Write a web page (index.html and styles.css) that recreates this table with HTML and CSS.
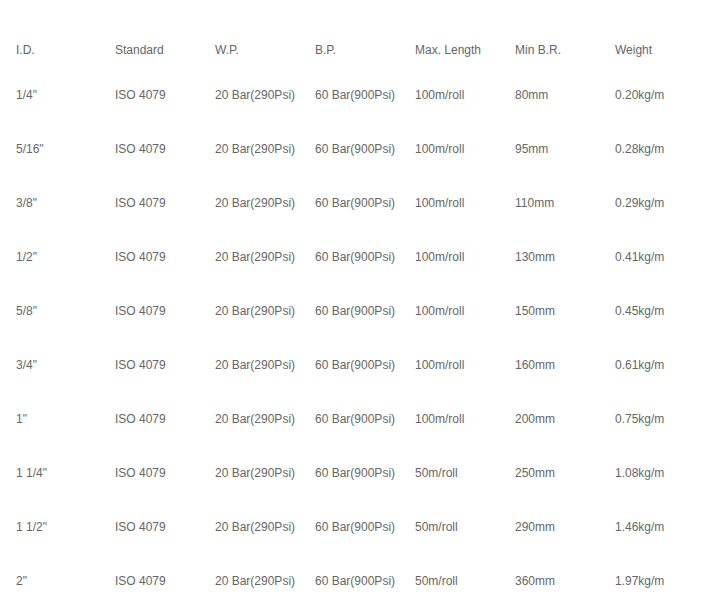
FILE: index.html
```html
<!DOCTYPE html>
<html>
<head>
<meta charset="utf-8">
<link rel="stylesheet" href="styles.css">
</head>
<body>
<table class="spec">
  <thead>
    <tr><th>I.D.</th><th>Standard</th><th>W.P.</th><th>B.P.</th><th>Max. Length</th><th>Min B.R.</th><th>Weight</th></tr>
  </thead>
  <tbody>
    <tr><td>1/4"</td><td>ISO 4079</td><td>20 Bar(290Psi)</td><td>60 Bar(900Psi)</td><td>100m/roll</td><td>80mm</td><td>0.20kg/m</td></tr>
    <tr><td>5/16"</td><td>ISO 4079</td><td>20 Bar(290Psi)</td><td>60 Bar(900Psi)</td><td>100m/roll</td><td>95mm</td><td>0.28kg/m</td></tr>
    <tr><td>3/8"</td><td>ISO 4079</td><td>20 Bar(290Psi)</td><td>60 Bar(900Psi)</td><td>100m/roll</td><td>110mm</td><td>0.29kg/m</td></tr>
    <tr><td>1/2"</td><td>ISO 4079</td><td>20 Bar(290Psi)</td><td>60 Bar(900Psi)</td><td>100m/roll</td><td>130mm</td><td>0.41kg/m</td></tr>
    <tr><td>5/8"</td><td>ISO 4079</td><td>20 Bar(290Psi)</td><td>60 Bar(900Psi)</td><td>100m/roll</td><td>150mm</td><td>0.45kg/m</td></tr>
    <tr><td>3/4"</td><td>ISO 4079</td><td>20 Bar(290Psi)</td><td>60 Bar(900Psi)</td><td>100m/roll</td><td>160mm</td><td>0.61kg/m</td></tr>
    <tr><td>1"</td><td>ISO 4079</td><td>20 Bar(290Psi)</td><td>60 Bar(900Psi)</td><td>100m/roll</td><td>200mm</td><td>0.75kg/m</td></tr>
    <tr><td>1 1/4"</td><td>ISO 4079</td><td>20 Bar(290Psi)</td><td>60 Bar(900Psi)</td><td>50m/roll</td><td>250mm</td><td>1.08kg/m</td></tr>
    <tr><td>1 1/2"</td><td>ISO 4079</td><td>20 Bar(290Psi)</td><td>60 Bar(900Psi)</td><td>50m/roll</td><td>290mm</td><td>1.46kg/m</td></tr>
    <tr><td>2"</td><td>ISO 4079</td><td>20 Bar(290Psi)</td><td>60 Bar(900Psi)</td><td>50m/roll</td><td>360mm</td><td>1.97kg/m</td></tr>
  </tbody>
</table>
</body>
</html>
```
FILE: styles.css
```css
html, body {
  margin: 0;
  padding: 0;
  background: #fff;
}
body {
  font-family: "Liberation Sans", Arial, sans-serif;
  font-size: 12px;
  color: #666;
  padding: 30px 0 0 15px;
}
.spec {
  border-collapse: collapse;
  table-layout: fixed;
  width: 700px;
}
.spec th, .spec td {
  width: 100px;
  padding: 0;
  text-align: left;
  font-weight: normal;
  vertical-align: middle;
  white-space: nowrap;
}
.spec th:first-child, .spec td:first-child {
  text-indent: 1px;
}
.spec th {
  height: 36px;
  padding-top: 2px;
}
.spec td {
  height: 54px;
}
```
